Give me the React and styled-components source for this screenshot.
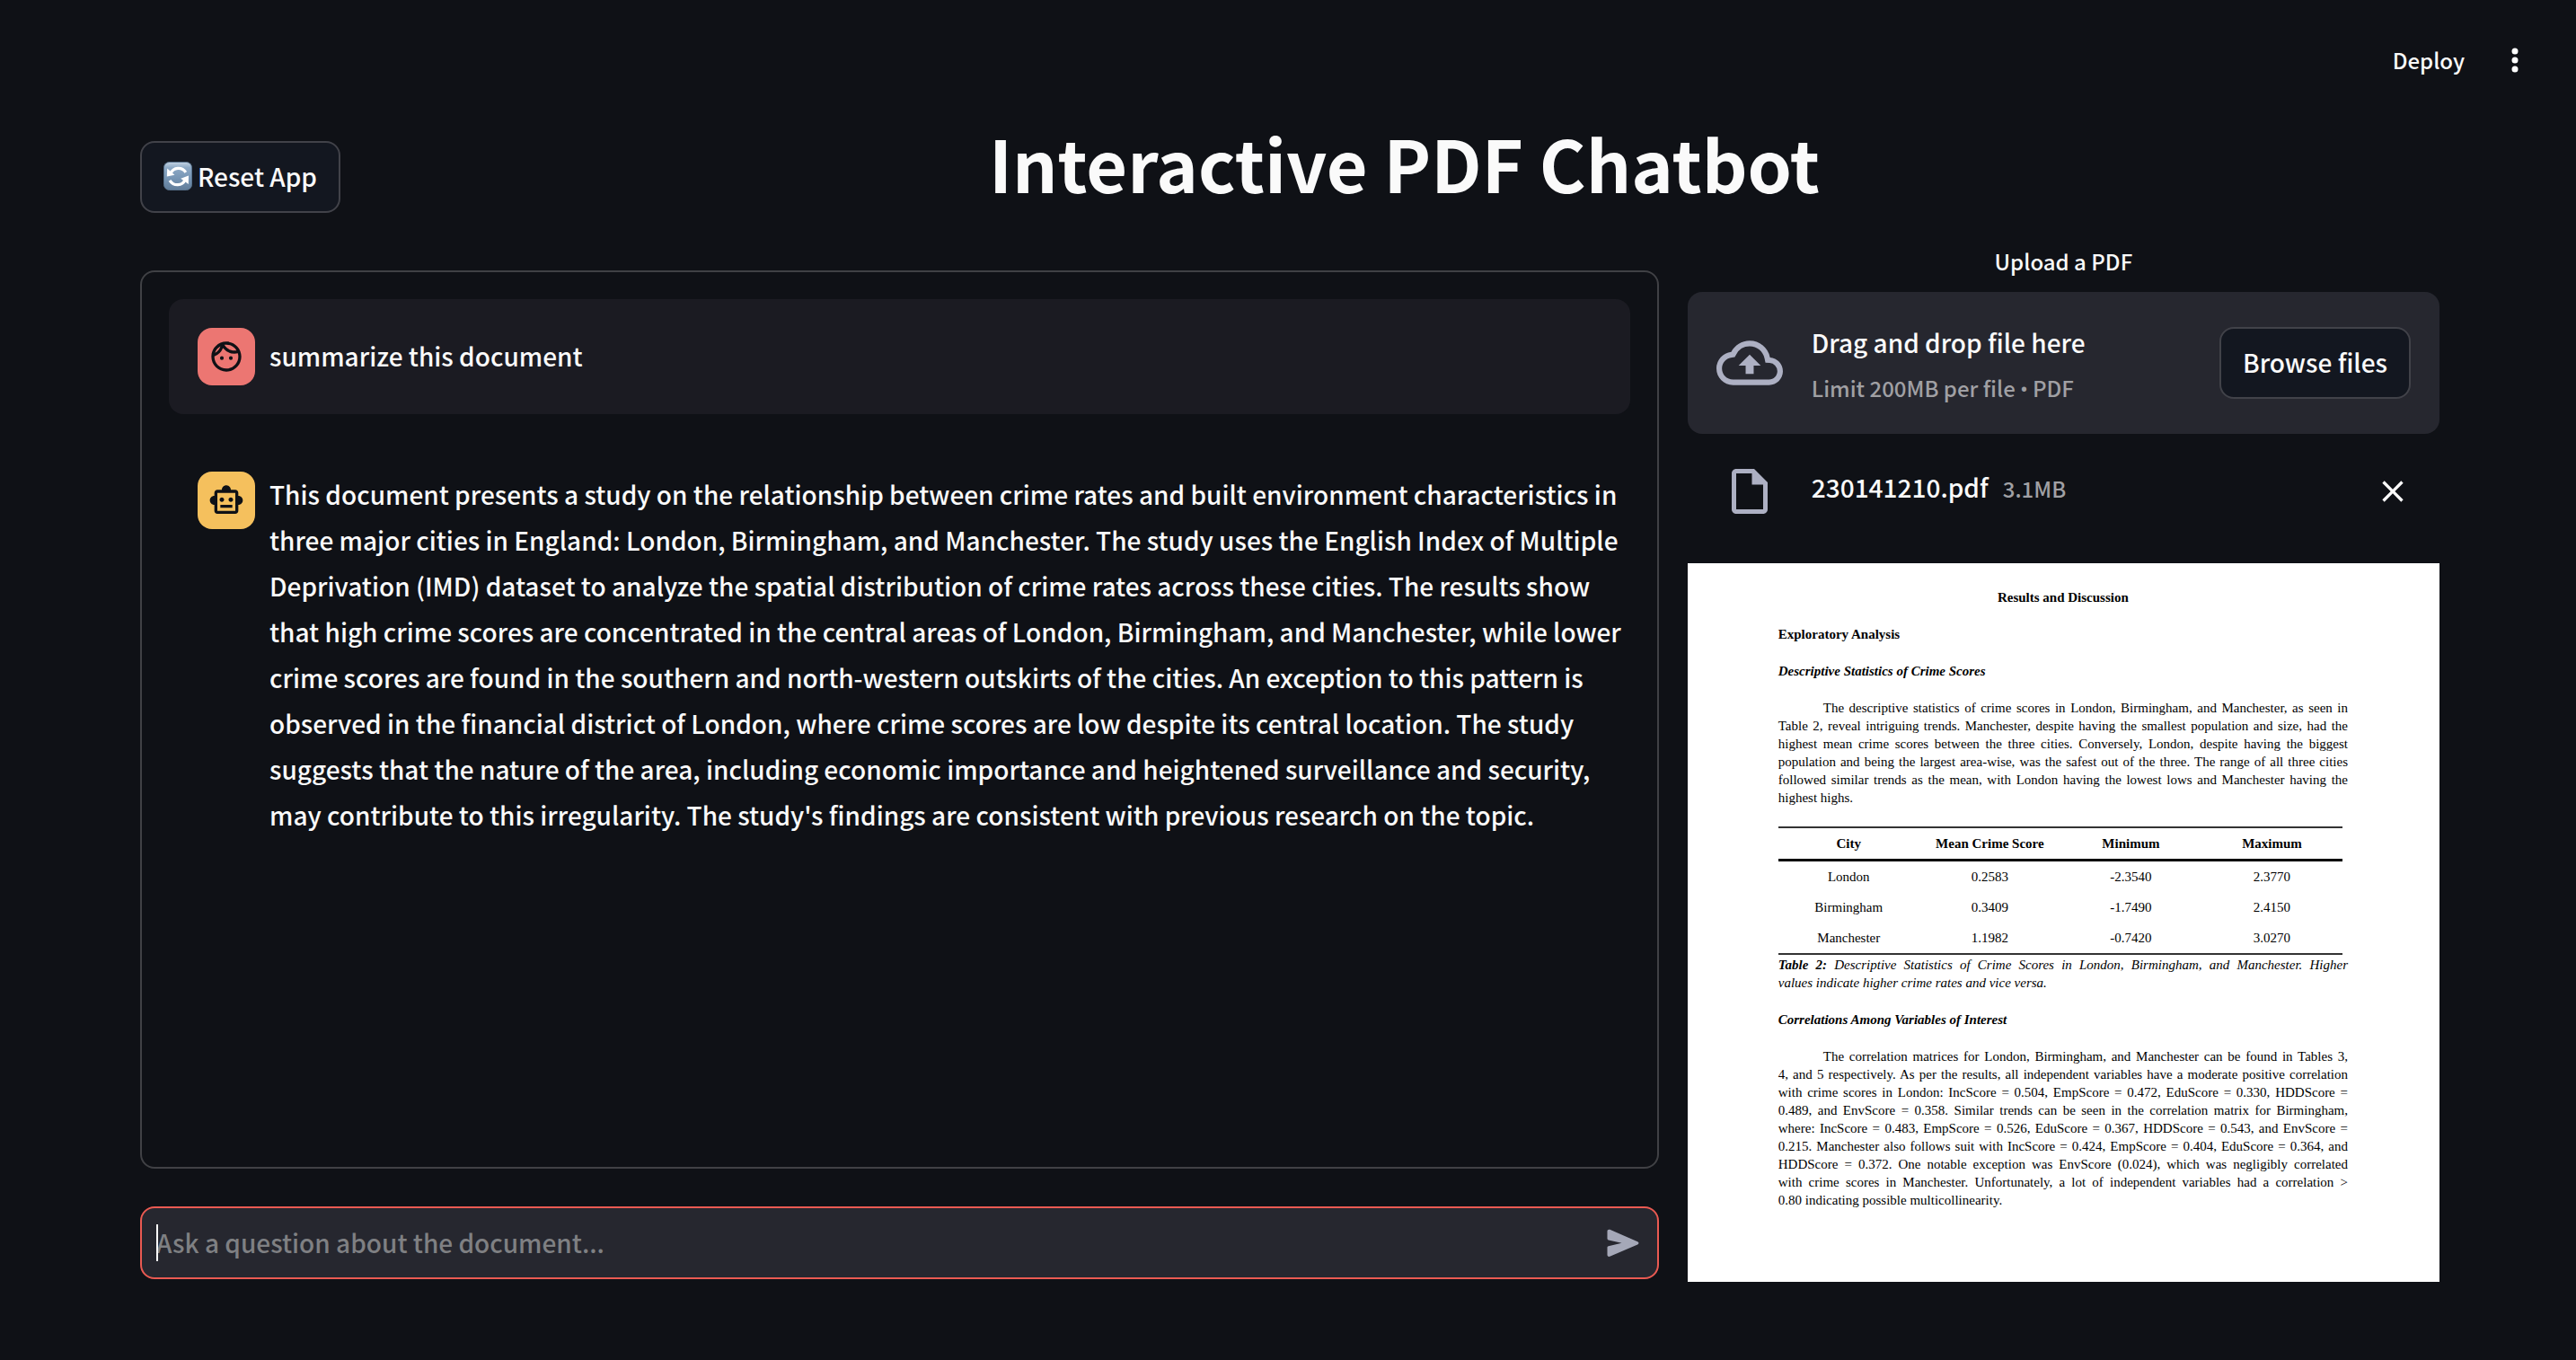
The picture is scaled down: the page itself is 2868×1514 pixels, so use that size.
import React from "react";
import styled, { createGlobalStyle } from "styled-components";
import {
  MdClose,
  MdOutlineCloudUpload,
  MdOutlineFace,
  MdOutlineInsertDriveFile,
  MdOutlineSmartToy,
} from "react-icons/md";

const c = {
  bg: "#0f1116",
  panel: "#26272f",
  userRow: "#1b1b22",
  button: "#131720",
  line: "#404145",
  buttonLine: "#414249",
  text: "#fafafa",
  muted: "#a0a0a4",
  placeholder: "#7f8083",
  icon: "#adb0c3",
  send: "#a5a8b8",
  accent: "#ea5a52",
  user: "#ec7672",
  bot: "#f5c05d",
};

const GlobalStyle = createGlobalStyle`
  *, *::before, *::after { box-sizing: border-box; }
  body {
    margin: 0;
    background: ${c.bg};
    color: ${c.text};
    font-family: "Noto Sans CJK SC", "Noto Sans", sans-serif;
    font-size: 28px;
    font-weight: 500;
    line-height: 51px;
  }
  h1, h2, h3, p { margin: 0; }
  button, input { font: inherit; color: inherit; }
  svg { display: block; flex: none; }
`;

const Page = styled.div`
  min-height: 100vh;
`;

const TopBar = styled.header`
  display: flex;
  justify-content: flex-end;
  align-items: flex-start;
  gap: 34px;
  height: 131px;
  padding: 3px 46px 0 0;
`;

const BarButton = styled.button`
  display: flex;
  align-items: center;
  justify-content: center;
  min-width: 44px;
  height: 128px;
  padding: 0;
  border: 0;
  background: none;
  font-size: 24px;
  line-height: 40px;
  cursor: pointer;
`;

const Main = styled.main`
  padding: 0 152px 80px 156px;
`;

const TitleRow = styled.div`
  display: flex;
  align-items: flex-end;
  gap: 32px;
  margin-bottom: 32px;
`;

const Button = styled.button`
  display: flex;
  align-items: center;
  gap: 6px;
  flex: none;
  height: 80px;
  padding: 0 24px 2px;
  border: 2px solid ${c.buttonLine};
  border-radius: 16px;
  background: ${c.button};
  line-height: 48px;
  white-space: nowrap;
  cursor: pointer;
`;

const Title = styled.h1`
  flex: 1;
  padding-bottom: 6px;
  font-size: 79px;
  font-weight: 700;
  line-height: 100px;
  text-align: center;
`;

const Columns = styled.div`
  display: flex;
  gap: 32px;
`;

const ChatColumn = styled.section`
  display: flex;
  flex-direction: column;
  gap: 42px;
  width: calc(66.67% - 16px);
  padding: 32px 0 3px;
`;

const FileColumn = styled.section`
  display: flex;
  flex-direction: column;
  flex: 1;
  min-width: 0;
`;

const ChatPanel = styled.div`
  display: flex;
  flex-direction: column;
  gap: 32px;
  flex: 1;
  padding: 30px;
  border: 2px solid ${c.line};
  border-radius: 16px;
`;

const Message = styled.article`
  display: flex;
  align-items: ${(p) => (p.$user ? "center" : "flex-start")};
  gap: 16px;
  padding: ${(p) => (p.$user ? "32px" : "32px 0 32px 32px")};
  border-radius: 16px;
  background: ${(p) => (p.$user ? c.userRow : "transparent")};
`;

const Avatar = styled.div`
  display: grid;
  place-items: center;
  flex: none;
  width: 64px;
  height: 64px;
  border-radius: 16px;
  background: ${(p) => (p.$user ? c.user : c.bot)};
  color: ${c.bg};
`;

const MessageText = styled.p`
  flex: 1;
  min-width: 0;
  padding-bottom: 2px;
`;

const Composer = styled.form`
  position: relative;
  display: flex;
  align-items: center;
  height: 81px;
  padding: 0 18px 0 16px;
  border: 2px solid ${c.accent};
  border-radius: 16px;
  background: ${c.panel};
`;

const Question = styled.input`
  flex: 1;
  min-width: 0;
  height: 48px;
  padding: 0;
  border: 0;
  outline: 0;
  background: none;
  caret-color: transparent;
  &::placeholder {
    color: ${c.placeholder};
    opacity: 1;
  }
`;

const Caret = styled.span`
  position: absolute;
  left: 16px;
  top: 18px;
  width: 2px;
  height: 41px;
  background: #fff;
`;

const IconButton = styled.button`
  display: grid;
  place-items: center;
  flex: none;
  width: 40px;
  height: 40px;
  padding: 0;
  border: 0;
  background: none;
  color: ${(p) => p.$color || c.text};
  cursor: pointer;
`;

const UploadLabel = styled.h2`
  padding-top: 2px;
  margin-bottom: 14px;
  font-size: 24px;
  font-weight: 500;
  line-height: 40px;
  text-align: center;
`;

const DropZone = styled.div`
  display: flex;
  align-items: center;
  gap: 32px;
  height: 158px;
  padding: 0 32px;
  border-radius: 16px;
  background: ${c.panel};
`;

const IconSlot = styled.div`
  display: grid;
  place-items: center;
  flex: none;
  width: 74px;
  color: ${c.icon};
`;

const DropText = styled.div`
  flex: 1;
  padding-top: 2px;
  line-height: 56px;
`;

const Small = styled.div`
  color: ${c.muted};
  font-size: 24px;
  line-height: 46px;
`;

const Bullet = styled.span`
  font-family: Roboto, sans-serif;
`;

const FileRow = styled.div`
  display: flex;
  align-items: center;
  gap: 32px;
  height: 64px;
  margin: 32px 0 48px;
  padding: 0 32px;
`;

const FileName = styled.div`
  display: flex;
  align-items: baseline;
  gap: 16px;
  flex: 1;
  padding-bottom: 10px;
`;

const Sheet = styled.article`
  display: flex;
  flex-direction: column;
  gap: 21px;
  min-height: 800px;
  padding: 28px 102px 80px 101px;
  background: #fff;
  color: #000;
  font-family: "Liberation Serif", "Times New Roman", serif;
  font-size: 15px;
  font-weight: 400;
  line-height: 20px;
`;

const SheetTitle = styled.h2`
  font-size: 15px;
  text-align: center;
`;

const SheetHeading = styled.h3`
  font-size: 15px;
  font-style: ${(p) => (p.$italic ? "italic" : "normal")};
`;

const Line = styled.span`
  display: block;
  text-align-last: justify;
  &:last-child {
    text-align-last: left;
  }
`;

const Paragraph = styled.p`
  ${Line}:first-child {
    padding-left: 50px;
  }
`;

const Caption = styled.figcaption`
  font-style: italic;
`;

const Figure = styled.figure`
  margin: 0;
`;

const Table = styled.table`
  width: calc(100% - 6px);
  margin: 1px 0;
  border-collapse: separate;
  border-spacing: 0;
  border-top: 2px solid #333;
  border-bottom: 2px solid #333;
  table-layout: fixed;
  text-align: center;
  th, td {
    height: 34px;
    padding: 0;
  }
  th {
    height: 37px;
    border-bottom: 3px solid #000;
  }
`;

const rows = [
  ["London", "0.2583", "-2.3540", "2.3770"],
  ["Birmingham", "0.3409", "-1.7490", "2.4150"],
  ["Manchester", "1.1982", "-0.7420", "3.0270"],
];

const statistics = [
  "The descriptive statistics of crime scores in London, Birmingham, and Manchester, as seen in",
  "Table 2, reveal intriguing trends. Manchester, despite having the smallest population and size, had the",
  "highest mean crime scores between the three cities. Conversely, London, despite having the biggest",
  "population and being the largest area-wise, was the safest out of the three. The range of all three cities",
  "followed similar trends as the mean, with London having the lowest lows and Manchester having the",
  "highest highs.",
];

const correlations = [
  "The correlation matrices for London, Birmingham, and Manchester can be found in Tables 3,",
  "4, and 5 respectively. As per the results, all independent variables have a moderate positive correlation",
  "with crime scores in London: IncScore = 0.504, EmpScore = 0.472, EduScore = 0.330, HDDScore =",
  "0.489, and EnvScore = 0.358. Similar trends can be seen in the correlation matrix for Birmingham,",
  "where: IncScore = 0.483, EmpScore = 0.526, EduScore = 0.367, HDDScore = 0.543, and EnvScore =",
  "0.215. Manchester also follows suit with IncScore = 0.424, EmpScore = 0.404, EduScore = 0.364, and",
  "HDDScore = 0.372. One notable exception was EnvScore (0.024), which was negligibly correlated",
  "with crime scores in Manchester. Unfortunately, a lot of independent variables had a correlation >",
  "0.80 indicating possible multicollinearity.",
];

function SetParagraph({ lines }) {
  return (
    <Paragraph>
      {lines.map((line) => (
        <Line key={line}>{line}</Line>
      ))}
    </Paragraph>
  );
}

function ResetIcon() {
  return (
    <svg width="32" height="32" viewBox="0 0 32 32" aria-hidden="true">
      <defs>
        <linearGradient id="resetFill" x1="0" y1="0" x2="0" y2="1">
          <stop offset="0" stopColor="#c3d3e2" />
          <stop offset="0.2" stopColor="#8eaac6" />
          <stop offset="0.6" stopColor="#7594b3" />
          <stop offset="1" stopColor="#607c99" />
        </linearGradient>
      </defs>
      <rect x="0.5" y="0.5" width="31" height="31" rx="6" fill="url(#resetFill)" stroke="#58728c" />
      <path d="M8 13C11 6.2 20.5 5.2 24.8 11.8" fill="none" stroke="#fff" strokeWidth="3.2" />
      <path d="M4.2 7.6L3.8 16.6L12.4 14.8Z" fill="#fff" />
      <path d="M24 20.4C21 27 11.5 27.8 7 20.8" fill="none" stroke="#fff" strokeWidth="3.2" />
      <path d="M28 15.6L27.8 25L19.2 18.8Z" fill="#fff" />
    </svg>
  );
}

function DotsIcon() {
  return (
    <svg width="8" height="28" viewBox="0 0 8 28" fill="#fff" aria-hidden="true">
      <circle cx="4" cy="4" r="3.5" />
      <circle cx="4" cy="14" r="3.5" />
      <circle cx="4" cy="24" r="3.5" />
    </svg>
  );
}

function SendIcon() {
  return (
    <svg width="36" height="32" viewBox="0 0 36 32" fill="currentColor" aria-hidden="true">
      <path d="M0.5 2.6C0.5 1 2 0.3 3.3 0.8L34.2 14.2C35.9 15 35.9 16.6 34.2 17.4L3.3 30.8C2 31.3 0.5 30.6 0.5 29V20.8C0.5 20 1 19.4 1.8 19.2L16.5 15.8L1.8 12.4C1 12.2 0.5 11.6 0.5 10.8Z" />
    </svg>
  );
}

export default function App() {
  return (
    <Page>
      <GlobalStyle />
      <TopBar>
        <BarButton type="button">Deploy</BarButton>
        <BarButton type="button" aria-label="Menu">
          <DotsIcon />
        </BarButton>
      </TopBar>
      <Main>
        <TitleRow>
          <Button type="button">
            <ResetIcon />
            Reset App
          </Button>
          <Title>Interactive PDF Chatbot</Title>
        </TitleRow>
        <Columns>
          <ChatColumn>
            <ChatPanel>
              <Message $user>
                <Avatar $user>
                  <MdOutlineFace size={40} />
                </Avatar>
                <MessageText>summarize this document</MessageText>
              </Message>
              <Message>
                <Avatar>
                  <MdOutlineSmartToy size={40} />
                </Avatar>
                <MessageText>
                  This document presents a study on the relationship between crime rates and built
                  environment characteristics in three major cities in England: London, Birmingham,
                  and Manchester. The study uses the English Index of Multiple Deprivation (IMD)
                  dataset to analyze the spatial distribution of crime rates across these cities. The
                  results show that high crime scores are concentrated in the central areas of London,
                  Birmingham, and Manchester, while lower crime scores are found in the southern and
                  north-western outskirts of the cities. An exception to this pattern is observed in
                  the financial district of London, where crime scores are low despite its central
                  location. The study suggests that the nature of the area, including economic
                  importance and heightened surveillance and security, may contribute to this
                  irregularity. The study's findings are consistent with previous research on the
                  topic.
                </MessageText>
              </Message>
            </ChatPanel>
            <Composer onSubmit={(e) => e.preventDefault()}>
              <Question
                type="text"
                aria-label="Ask a question about the document"
                placeholder="Ask a question about the document..."
              />
              <Caret />
              <IconButton type="submit" aria-label="Send" $color={c.send}>
                <SendIcon />
              </IconButton>
            </Composer>
          </ChatColumn>
          <FileColumn>
            <UploadLabel>Upload a PDF</UploadLabel>
            <DropZone>
              <IconSlot>
                <MdOutlineCloudUpload size={74} />
              </IconSlot>
              <DropText>
                Drag and drop file here
                <Small>
                  Limit 200MB per file <Bullet>•</Bullet> PDF
                </Small>
              </DropText>
              <Button type="button">Browse files</Button>
            </DropZone>
            <FileRow>
              <IconSlot>
                <MdOutlineInsertDriveFile size={60} />
              </IconSlot>
              <FileName>
                230141210.pdf
                <Small>3.1MB</Small>
              </FileName>
              <IconButton type="button" aria-label="Remove file">
                <MdClose size={40} />
              </IconButton>
            </FileRow>
            <Sheet>
              <SheetTitle>Results and Discussion</SheetTitle>
              <SheetHeading>Exploratory Analysis</SheetHeading>
              <SheetHeading $italic>Descriptive Statistics of Crime Scores</SheetHeading>
              <SetParagraph lines={statistics} />
              <Figure>
                <Table>
                  <thead>
                    <tr>
                      <th>City</th>
                      <th>Mean Crime Score</th>
                      <th>Minimum</th>
                      <th>Maximum</th>
                    </tr>
                  </thead>
                  <tbody>
                    {rows.map((row) => (
                      <tr key={row[0]}>
                        {row.map((cell) => (
                          <td key={cell}>{cell}</td>
                        ))}
                      </tr>
                    ))}
                  </tbody>
                </Table>
                <Caption>
                  <Line>
                    <strong>Table 2:</strong> Descriptive Statistics of Crime Scores in London,
                    Birmingham, and Manchester. Higher
                  </Line>
                  <Line>values indicate higher crime rates and vice versa.</Line>
                </Caption>
              </Figure>
              <SheetHeading $italic>Correlations Among Variables of Interest</SheetHeading>
              <SetParagraph lines={correlations} />
            </Sheet>
          </FileColumn>
        </Columns>
      </Main>
    </Page>
  );
}
